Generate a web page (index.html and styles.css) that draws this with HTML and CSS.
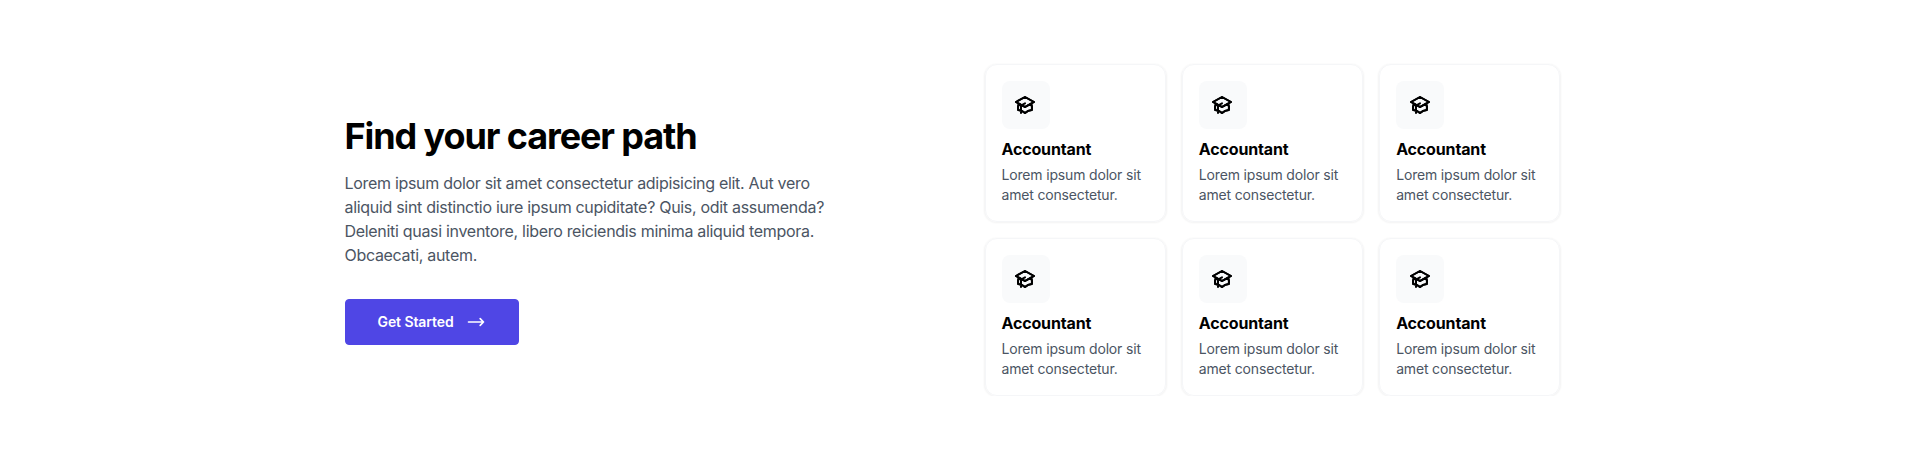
FILE: index.html
```html
<!DOCTYPE html>
<html lang="en">
<head>
<meta charset="utf-8">
<title>Find your career path</title>
<link rel="stylesheet" href="styles.css">
</head>
<body>
<svg class="sprite" aria-hidden="true">
  <symbol id="cap" viewBox="0 0 24 24">
    <path d="M12 14l9-5-9-5-9 5 9 5z"/>
    <path d="M12 14l6.16-3.422a12.083 12.083 0 01.665 6.479A11.952 11.952 0 0012 20.055a11.952 11.952 0 00-6.824-2.998 12.078 12.078 0 01.665-6.479L12 14z"/>
    <path d="M12 14l9-5-9-5-9 5 9 5zm0 0l6.16-3.422a12.083 12.083 0 01.665 6.479A11.952 11.952 0 0012 20.055a11.952 11.952 0 00-6.824-2.998 12.078 12.078 0 01.665-6.479L12 14zm-4 6v-7.5l4-2.222"/>
  </symbol>
</svg>
<section class="section">
  <div class="intro">
    <h2 class="title">Find your career path</h2>
    <p class="lead"><span class="line">Lorem ipsum dolor sit amet consectetur adipisicing elit. Aut vero</span> <span class="line">aliquid sint distinctio iure ipsum cupiditate? Quis, odit assumenda?</span> <span class="line">Deleniti quasi inventore, libero reiciendis minima aliquid tempora.</span> <span class="line">Obcaecati, autem.</span></p>
    <a class="button" href="#"><span class="button-label">Get Started</span><svg class="arrow" viewBox="0 0 24 24"><path d="M17 8l4 4m0 0l-4 4m4-4H3"/></svg></a>
  </div>
  <div class="grid">
    <a class="card" href="#"><span class="icon"><svg><use href="#cap"/></svg></span><h3 class="name">Accountant</h3><p class="desc">Lorem ipsum dolor sit<br>amet consectetur.</p></a>
    <a class="card" href="#"><span class="icon"><svg><use href="#cap"/></svg></span><h3 class="name">Accountant</h3><p class="desc">Lorem ipsum dolor sit<br>amet consectetur.</p></a>
    <a class="card" href="#"><span class="icon"><svg><use href="#cap"/></svg></span><h3 class="name">Accountant</h3><p class="desc">Lorem ipsum dolor sit<br>amet consectetur.</p></a>
    <a class="card" href="#"><span class="icon"><svg><use href="#cap"/></svg></span><h3 class="name">Accountant</h3><p class="desc">Lorem ipsum dolor sit<br>amet consectetur.</p></a>
    <a class="card" href="#"><span class="icon"><svg><use href="#cap"/></svg></span><h3 class="name">Accountant</h3><p class="desc">Lorem ipsum dolor sit<br>amet consectetur.</p></a>
    <a class="card" href="#"><span class="icon"><svg><use href="#cap"/></svg></span><h3 class="name">Accountant</h3><p class="desc">Lorem ipsum dolor sit<br>amet consectetur.</p></a>
  </div>
</section>
</body>
</html>
```
FILE: styles.css
```css
* { box-sizing: border-box; }
body { margin: 0; background: #fff; color: #000; font-family: Inter, sans-serif; line-height: 24px; }
h2, h3, p { margin: 0; }
a { color: inherit; text-decoration: none; }
.sprite { display: none; }
.section { display: grid; grid-template-columns: 576px 576px; column-gap: 64px; align-items: center; width: 1216px; margin: 0 auto; padding-top: 64px; }
.title { padding-top: 1px; height: 40px; font-size: 36px; line-height: 40px; font-weight: 700; letter-spacing: -1.1px; white-space: nowrap; }
.lead { margin-top: 16px; color: #4b5563; font-size: 16px; }
.line { display: block; white-space: nowrap; letter-spacing: -0.305px; }
.button { display: inline-flex; align-items: center; margin-top: 32px; padding: 12px 32px; height: 46px; width: 174.5px; border: 1px solid #4f46e5; border-radius: 4px; background: #4f46e5; color: #fff; }
.button-label { width: 77px; font-size: 14px; font-weight: 600; letter-spacing: -0.08px; white-space: nowrap; }
.arrow { flex: none; width: 20px; height: 20px; margin-left: 12px; fill: none; stroke: currentColor; stroke-width: 2; stroke-linecap: round; stroke-linejoin: round; }
.grid { display: grid; grid-template-columns: repeat(3, 1fr); gap: 16px; }
.card { display: block; height: 158px; padding: 16px; border: 1px solid #f5f6f8; border-radius: 12px; box-shadow: 0 0.5px 2px 0.5px rgba(0, 0, 0, .05); }
.icon { display: inline-block; padding: 12px 12.5px 12px 11.5px; height: 48px; width: 48px; border-radius: 8px; background: #f9fafb; vertical-align: top; }
.icon svg { display: block; width: 24px; height: 24px; fill: none; stroke: #000; stroke-width: 2; stroke-linecap: round; stroke-linejoin: round; }
.name { margin-top: 8px; font-size: 16px; line-height: 24px; font-weight: 700; letter-spacing: -0.15px; }
.desc { margin-top: 4px; color: #4b5563; font-size: 14px; line-height: 20px; letter-spacing: -0.17px; white-space: nowrap; }
```
